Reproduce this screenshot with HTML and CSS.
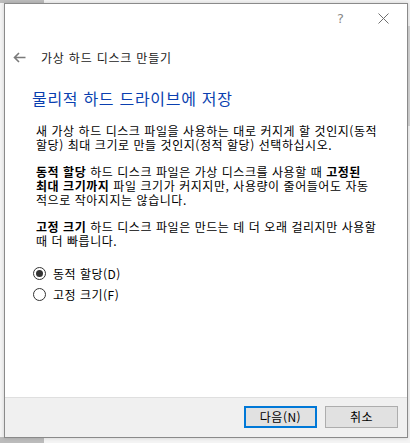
FILE: index.html
```html
<!DOCTYPE html>
<html lang="ko">
<head>
    <meta charset="UTF-8">
    <title>가상 하드 디스크 만들기</title>
    <link rel="stylesheet" href="styles.css">
</head>
<body>
    <div class="desk desk-top"></div>
    <div class="desk desk-bottom"></div>
    <div class="desk desk-right"></div>
    <div class="window">
        <div class="titlebar">
            <span class="help">?</span>
            <span class="close">
                <svg width="11" height="11" viewBox="0 0 11 11">
                    <path d="M0.5 0.5 L10.5 10.5 M10.5 0.5 L0.5 10.5" stroke="#6f6f6f" stroke-width="1" fill="none"/>
                </svg>
            </span>
        </div>

        <div class="wizard-head">
            <svg class="back" width="13" height="11" viewBox="0 0 13 11">
                <path d="M12.5 5.5 H1.5 M6 1 L1.5 5.5 L6 10" stroke="#7a7a7a" stroke-width="1.6" fill="none"/>
            </svg>
            <span class="wizard-title">가상 하드 디스크 만들기</span>
        </div>

        <div class="content">
            <h1>물리적 하드 드라이브에 저장</h1>

            <p>새 가상 하드 디스크 파일을 사용하는 대로 커지게 할 것인지(동적<br>할당) 최대 크기로 만들 것인지(정적 할당) 선택하십시오.</p>

            <p><b>동적 할당</b> 하드 디스크 파일은 가상 디스크를 사용할 때 <b>고정된</b><br><b>최대 크기까지</b> 파일 크기가 커지지만, 사용량이 줄어들어도 자동<br>적으로 작아지지는 않습니다.</p>

            <p><b>고정 크기</b> 하드 디스크 파일은 만드는 데 더 오래 걸리지만 사용할<br>때 더 빠릅니다.</p>

            <div class="options">
                <label class="option">
                    <span class="radio checked"></span>
                    동적 할당(D)
                </label>
                <label class="option">
                    <span class="radio"></span>
                    고정 크기(F)
                </label>
            </div>
        </div>

        <div class="footer">
            <button class="btn default">다음(N)</button>
            <button class="btn">취소</button>
        </div>
    </div>
</body>
</html>
```

FILE: styles.css
```css
body {
    margin: 0;
    width: 410px;
    height: 443px;
    overflow: hidden;
    background-color: #f4f4f4;
    font-family: "Noto Sans CJK KR", "Noto Sans", sans-serif;
    font-size: 12px;
    color: #000;
    position: relative;
}
.desk {
    position: absolute;
    background-color: #bcbcbc;
}
.desk-top {
    left: 0;
    top: 0;
    width: 44px;
    height: 3px;
}
.desk-bottom {
    left: 0;
    bottom: 0;
    width: 44px;
    height: 6px;
}
.desk-right {
    right: 0;
    top: 26px;
    width: 3px;
    height: 100px;
    background-color: #d4d4d4;
}
.window {
    position: relative;
    margin: 3px 0 0 4px;
    width: 402px;
    height: 433px;
    background: #fff;
    border: 1px solid #8a8a8a;
    display: flex;
    flex-direction: column;
    box-shadow: 0 0 4px rgba(0, 0, 0, 0.15);
}
.titlebar {
    height: 30px;
    display: flex;
    align-items: center;
    justify-content: flex-end;
}
.help {
    font-family: "DejaVu Sans", sans-serif;
    font-size: 13px;
    color: #8a8a8a;
    margin-right: 34px;
    margin-top: -2px;
}
.close {
    display: flex;
    margin-right: 18px;
    margin-top: -2px;
}
.wizard-head {
    display: flex;
    align-items: center;
    height: 20px;
    margin-top: 13px;
    padding-left: 8px;
}
.back {
    margin-right: 15px;
}
.wizard-title {
    font-size: 12px;
    color: #1a1a1a;
    letter-spacing: 0.8px;
}
.content {
    flex: 1;
    padding: 0 10px 0 31px;
}
h1 {
    font-size: 16px;
    font-weight: normal;
    color: #0a3fb0;
    margin: 21px 0 0 -4px;
    line-height: 20px;
    letter-spacing: 0.7px;
}
p {
    margin: 13px 0 0 0;
    line-height: 14px;
    white-space: nowrap;
    letter-spacing: 0.55px;
}
h1 + p {
    margin-top: 16px;
}
p b {
    display: inline-block;
    font-weight: bold;
    line-height: 14px;
    height: 14px;
}
.options {
    margin-top: 18px;
    display: flex;
    flex-direction: column;
    gap: 6px;
}
.option {
    display: flex;
    align-items: center;
    height: 15px;
    line-height: 15px;
    margin-left: -3px;
    letter-spacing: 0.5px;
}
.radio {
    width: 11px;
    height: 11px;
    border: 1px solid #333;
    border-radius: 50%;
    margin-right: 7px;
    display: flex;
    align-items: center;
    justify-content: center;
}
.radio.checked::after {
    content: "";
    width: 7px;
    height: 7px;
    border-radius: 50%;
    background: #333;
}
.footer {
    height: 40px;
    background-color: #f0f0f0;
    border-top: 1px solid #dfdfdf;
    display: flex;
    justify-content: flex-end;
    align-items: flex-start;
    gap: 8px;
    padding: 8px 9px 0 0;
    box-sizing: border-box;
}
.btn {
    width: 73px;
    height: 22px;
    background-color: #e1e1e1;
    border: 1px solid #adadad;
    font-family: "Noto Sans CJK KR", sans-serif;
    font-size: 12px;
    color: #000;
    padding: 0;
    line-height: 18px;
    letter-spacing: 0.5px;
}
.btn.default {
    border: 2px solid #0078d7;
    line-height: 16px;
}
```
